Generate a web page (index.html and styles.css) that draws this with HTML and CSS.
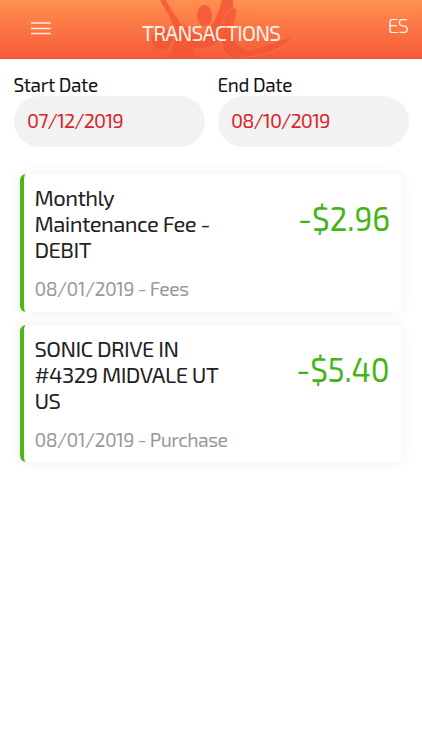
FILE: index.html
```html
<!DOCTYPE html>
<html lang="en">

<head>
    <meta charset="UTF-8">
    <meta name="viewport" content="width=device-width, initial-scale=1.0">
    <title>Transactions</title>
    <link rel="stylesheet" href="styles.css">
</head>

<body>
    <header class="top-bar">
        <svg class="top-logo" width="160" height="59" viewBox="0 0 160 59">
            <path d="M20 0 L26 0 C32 13 42 22 47 36 C51 46 55 53 57 59 L27 59 C34 48 37 38 34 27 C30 15 24 8 20 0Z" />
            <ellipse cx="22" cy="39" rx="10" ry="11" />
            <ellipse cx="64.500" cy="15.500" rx="7.500" ry="10.500" />
            <path d="M43 22 C49 33 57 33 65 33 C73 26 79 13 82 0 L93 0 C94 14 87 27 81 38 C75 48 53 52 49 43Z" />
            <path class="swoosh" d="M94 8 C84 10 78 31 82 45 C84 53 89 59 96 59 L120 55 C132 52 145 46 153 37 C140 40 128 44 114 49 C104 52 92 43 93 30 C94 20 99 10 94 8Z" />
        </svg>
        <button class="menu-button" type="button" aria-label="Menu">
            <svg width="20" height="14" viewBox="0 0 20 14">
                <path d="M0 2h20M0 7.500h20M0 12.500h20" />
            </svg>
        </button>
        <h1>TRANSACTIONS</h1>
        <a class="language">ES</a>
    </header>

    <main>
        <form class="date-filter">
            <div class="date-field">
                <label for="StartDate">Start Date</label>
                <input type="text" id="StartDate" value="07/12/2019">
            </div>
            <div class="date-field">
                <label for="EndDate">End Date</label>
                <input type="text" id="EndDate" value="08/10/2019">
            </div>
        </form>

        <section class="transactions">
            <article class="transaction">
                <div class="details">
                    <h2>Monthly<br>Maintenance Fee -<br>DEBIT</h2>
                    <p>08/01/2019 - Fees</p>
                </div>
                <div class="amount">-$2.96</div>
            </article>
            <article class="transaction">
                <div class="details">
                    <h2>SONIC DRIVE IN<br>#4329 MIDVALE UT<br>US</h2>
                    <p>08/01/2019 - Purchase</p>
                </div>
                <div class="amount">-$5.40</div>
            </article>
        </section>
    </main>
</body>

</html>
```

FILE: styles.css
```css
* {
    margin: 0;
    padding: 0;
    box-sizing: border-box;
}

body {
    background-color: #fff;
    font-family: "Exo 2", Roboto, sans-serif;
    font-weight: 400;
}

.top-bar {
    position: relative;
    display: grid;
    grid-template-columns: 80px 1fr 80px;
    height: 59px;
    overflow: hidden;
    background: linear-gradient(#ff904f, #f65a38);
    border-bottom: 1px solid #e65336;
    color: #fff0e6;
}

/* figure behind the title */
.top-logo {
    position: absolute;
    left: 140px;
    top: 0;
    fill: #f45535;
    opacity: 0.8;
}

.top-logo .swoosh {
    stroke: #f97044;
    stroke-width: 1;
}

.menu-button {
    justify-self: start;
    align-self: start;
    margin: 21px 0 0 30.500px;
    height: 14px;
    border: none;
    background: none;
}

.menu-button svg {
    display: block;
    fill: none;
    stroke: #ffeadd;
    stroke-width: 1.6;
}

h1 {
    position: relative;
    padding-top: 20px;
    font-size: 21px;
    line-height: 26px;
    font-weight: 400;
    letter-spacing: -0.8px;
    text-align: center;
    white-space: nowrap;
}

.language {
    padding: 12px 14px 0 0;
    font-size: 20px;
    line-height: 26px;
    font-weight: 300;
    letter-spacing: -1px;
    text-align: right;
}

.date-filter {
    display: flex;
    gap: 13px;
    padding: 16px 13.500px 0;
}

.date-field {
    flex: 1;
    min-width: 0;
}

.date-field label {
    display: block;
    height: 21px;
    font-size: 19px;
    line-height: 20px;
    letter-spacing: -0.35px;
    color: #111;
}

.date-field input {
    display: block;
    width: 100%;
    height: 51px;
    padding: 0 13.500px 3px;
    border: none;
    border-radius: 26px;
    background-color: #f2f2f2;
    font-family: inherit;
    font-size: 20px;
    letter-spacing: -0.9px;
    color: #d9252a;
}

.transactions {
    display: flex;
    flex-direction: column;
    gap: 13px;
    padding: 27px 20px 20px;
}

.transaction {
    display: flex;
    justify-content: space-between;
    height: 137.500px;
    padding: 10px 12px 0 10.500px;
    border-left: 4px solid #4bb914;
    border-radius: 6px;
    background-color: #fff;
    box-shadow: 0 0 14px rgba(0, 0, 0, 0.07);
}

.details h2 {
    font-size: 22px;
    line-height: 26px;
    font-weight: 400;
    letter-spacing: -0.55px;
    color: #222;
    white-space: nowrap;
}

.details p {
    margin-top: 14px;
    font-size: 19.500px;
    line-height: 26px;
    letter-spacing: -0.55px;
    color: #999;
    white-space: nowrap;
}

/* condensed so the digits stay tall */
.amount {
    padding-top: 15px;
    font-size: 34px;
    line-height: 38px;
    color: #45b516;
    transform: scaleX(0.92);
    transform-origin: right;
}
```
